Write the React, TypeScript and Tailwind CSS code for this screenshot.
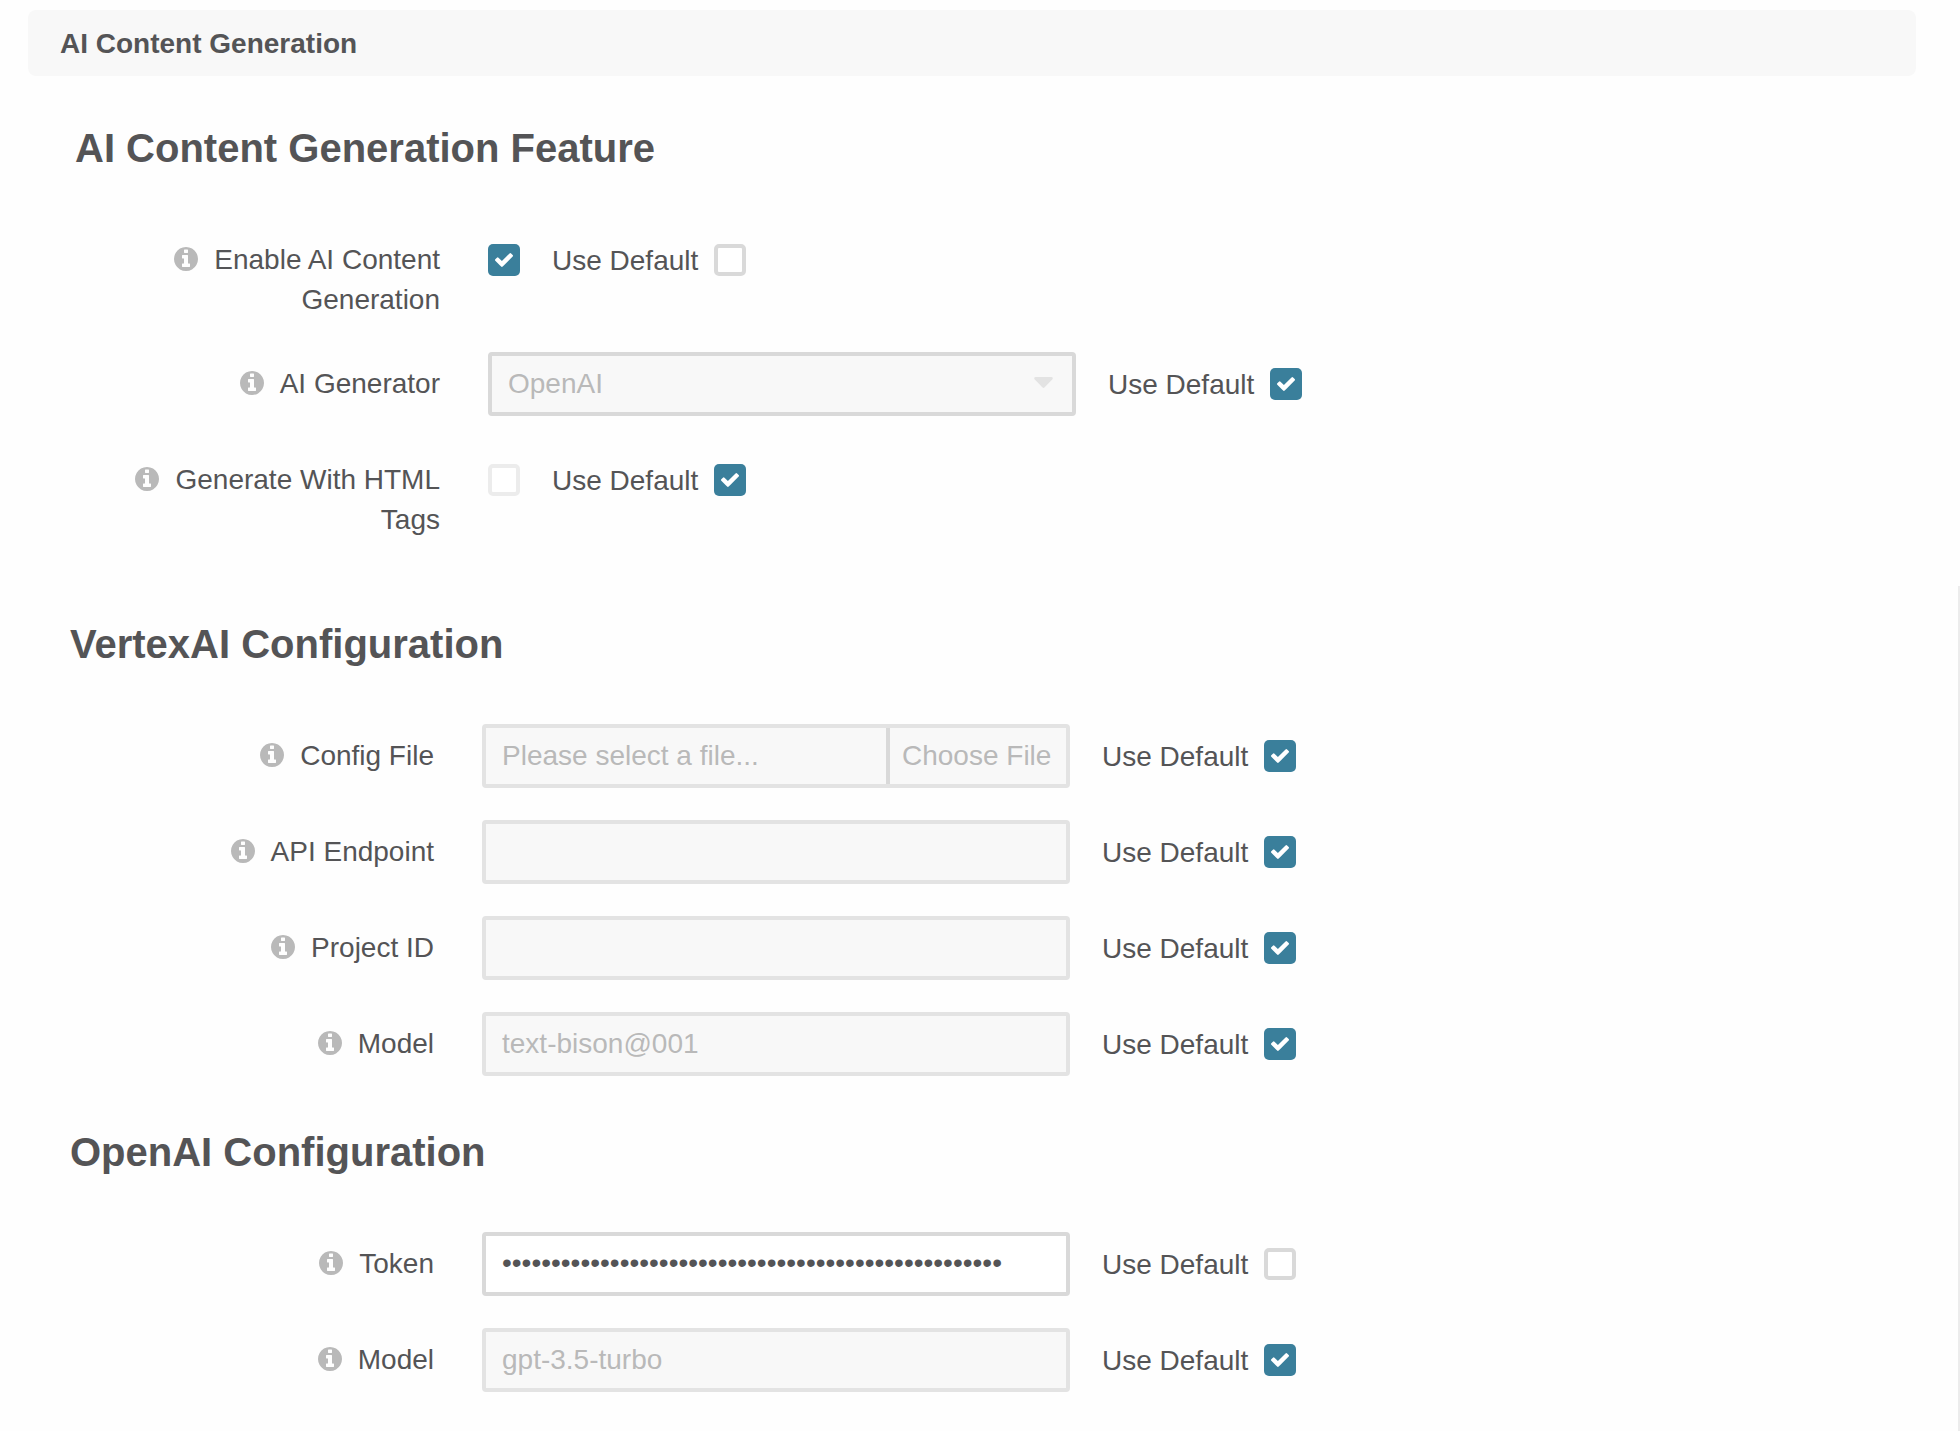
import React from "react";

const INFO_PATH =
  "M1152 1376v-160q0-14-9-23t-23-9h-96v-512q0-14-9-23t-23-9h-320q-14 0-23 9t-9 23v160q0 14 9 23t23 9h96v320h-96q-14 0-23 9t-9 23v160q0 14 9 23t23 9h448q14 0 23-9t9-23zM1024 480v-160q0-14-9-23t-23-9h-192q-14 0-23 9t-9 23v160q0 14 9 23t23 9h192q14 0 23-9t9-23zM1664 896q0 209-103 385.5t-279.5 279.5-385.5 103-385.5-103-279.5-279.5-103-385.5 103-385.5 279.5-279.5 385.5-103 385.5 103 279.5 279.5 103 385.5z";

const CHECK_PATH =
  "M1671 566q0 40-28 68l-724 724-136 136q-28 28-68 28t-68-28l-136-136-362-362q-28-28-28-68t28-68l136-136q28-28 68-28t68 28l294 295 656-657q28-28 68-28t68 28l136 136q28 28 28 68z";

type BoxState = "checked" | "empty" | "disabled";

function Checkbox({ state }: { state: BoxState }) {
  if (state === "checked") {
    return (
      <span className="flex size-8 shrink-0 items-center justify-center rounded-[5px] bg-[#3a7f9b]">
        <svg viewBox="121 334 1550 1188" className="h-[14px] w-[18px]" fill="#fff">
          <path d={CHECK_PATH} />
        </svg>
      </span>
    );
  }
  return (
    <span
      className={
        state === "empty"
          ? "size-8 shrink-0 rounded-[5px] border-4 border-[#d9d9d9] bg-white"
          : "size-8 shrink-0 rounded-[5px] border-4 border-[#ececec] bg-white"
      }
    />
  );
}

function UseDefault({ checked }: { checked: boolean }) {
  return (
    <div className="ml-8 flex items-center gap-4">
      <span className="pt-0.5 leading-10 whitespace-nowrap">Use Default</span>
      <Checkbox state={checked ? "checked" : "empty"} />
    </div>
  );
}

function Row({
  lines,
  checked,
  children,
}: {
  lines: string[];
  checked: boolean;
  children: React.ReactNode;
}) {
  return (
    <div className="flex h-16 items-start">
      <div className="mr-12 flex w-[364px] shrink-0 items-start justify-end gap-4 pt-3">
        <svg viewBox="128 128 1536 1536" className="mt-[7px] size-6 shrink-0" fill="#b9b9b9">
          <path d={INFO_PATH} />
        </svg>
        <div className="text-right leading-10 whitespace-nowrap">
          {lines.map((line) => (
            <div key={line}>{line}</div>
          ))}
        </div>
      </div>
      <div className="flex h-16 items-center">
        {children}
        <UseDefault checked={checked} />
      </div>
    </div>
  );
}

function Field({ value = "" }: { value?: string }) {
  return (
    <div className="flex h-16 w-[588px] items-center rounded-[4px] border-4 border-[#e3e3e3] bg-[#f8f8f8] px-4 leading-10 text-[#b9b9b9]">
      {value}
    </div>
  );
}

function Heading({ children }: { children: React.ReactNode }) {
  return <h2 className="text-[40px] leading-[48px] font-bold">{children}</h2>;
}

export default function App() {
  return (
    <div className="flex h-[1431px] w-full overflow-hidden bg-[#fefefe] font-['Liberation_Sans',Arial,sans-serif] text-[28px] text-[#545456]">
      <main className="flex-1">
        <header className="mt-[10px] mr-[42px] ml-7 flex h-[66px] items-center rounded-lg bg-[#f8f8f8] px-8 pt-0.5 leading-10 font-bold">
          AI Content Generation
        </header>

        <section className="mt-12 pl-[76px]">
          <div className="-ml-px">
            <Heading>AI Content Generation Feature</Heading>
          </div>
          <div className="mt-14">
            <Row lines={["Enable AI Content", "Generation"]} checked={false}>
              <Checkbox state="checked" />
            </Row>
          </div>
          <div className="mt-[60px] flex flex-col gap-8">
            <Row lines={["AI Generator"]} checked>
              <div className="flex h-16 w-[588px] items-center justify-between rounded-[4px] border-4 border-[#d9d9d9] bg-[#f8f8f8] pr-[19px] pl-4 leading-10 text-[#b9b9b9]">
                OpenAI
                <svg viewBox="0 0 19 11" className="mb-[3px] h-[11px] w-[19px]" fill="#e3e3e3">
                  <path d="M1.500 0h16q2.200 .5 .9 2.200l-7.700 8.100q-1.200 1.200-2.400 0L.6 2.200Q-.7 .5 1.500 0z" />
                </svg>
              </div>
            </Row>
            <Row lines={["Generate With HTML", "Tags"]} checked>
              <Checkbox state="disabled" />
            </Row>
          </div>
        </section>

        <section className="mt-[108px] pl-[70px]">
          <Heading>VertexAI Configuration</Heading>
          <div className="mt-14 flex flex-col gap-8">
            <Row lines={["Config File"]} checked>
              <div className="flex h-16 w-[588px] items-stretch rounded-[4px] border-4 border-[#e3e3e3] bg-[#f8f8f8] leading-[56px] text-[#b9b9b9]">
                <span className="flex-1 pl-4">Please select a file...</span>
                <span className="w-[180px] border-l-4 border-[#d9d9d9] pl-3 whitespace-nowrap">Choose File</span>
              </div>
            </Row>
            <Row lines={["API Endpoint"]} checked>
              <Field />
            </Row>
            <Row lines={["Project ID"]} checked>
              <Field />
            </Row>
            <Row lines={["Model"]} checked>
              <Field value="text-bison@001" />
            </Row>
          </div>
        </section>

        <section className="mt-[52px] pl-[70px]">
          <Heading>OpenAI Configuration</Heading>
          <div className="mt-14 flex flex-col gap-8">
            <Row lines={["Token"]} checked={false}>
              <div className="flex h-16 w-[588px] items-center rounded-[4px] border-4 border-[#d9d9d9] bg-white px-4 pb-0.5 leading-10">
                {"•".repeat(51)}
              </div>
            </Row>
            <Row lines={["Model"]} checked>
              <Field value="gpt-3.5-turbo" />
            </Row>
          </div>
        </section>
      </main>
      <aside className="mt-[586px] w-[2px] bg-[#ececec]" />
    </div>
  );
}
